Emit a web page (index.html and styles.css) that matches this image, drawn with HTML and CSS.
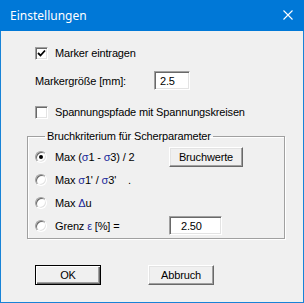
FILE: index.html
```html
<!DOCTYPE html>
<html lang="de">
<head>
<meta charset="UTF-8">
<title>Einstellungen</title>
<link rel="stylesheet" href="styles.css">
</head>
<body>

<div class="fenster">
  <div class="titel">
    <span>Einstellungen</span>
    <svg class="schliessen" width="10" height="10" viewBox="0 0 10 10">
      <path d="M0.5 0.5 L9.5 9.5 M9.5 0.5 L0.5 9.5" stroke="#fff" stroke-width="1.1" fill="none"/>
    </svg>
  </div>

  <div class="inhalt">
    <div class="zeile zeile-marker">
      <span class="check">
        <svg width="11" height="11" viewBox="0 0 11 11">
          <polyline points="2,5 4.5,7.5 9,2.5" stroke="#000" stroke-width="1.8" fill="none"/>
        </svg>
      </span>
      <span>Marker eintragen</span>
    </div>

    <div class="zeile zeile-groesse">
      <span class="beschriftung">Markergröße [mm]:</span>
      <span class="eingabe eingabe-klein">2.5</span>
    </div>

    <div class="zeile zeile-pfade">
      <span class="check"></span>
      <span>Spannungspfade mit Spannungskreisen</span>
    </div>

    <fieldset class="gruppe">
      <legend>Bruchkriterium für Scherparameter</legend>
      <div class="option">
        <span class="radio aktiv"></span>
        <span class="text">Max (<span class="sym">σ</span>1 - <span class="sym">σ</span>3) / 2</span>
        <span class="knopf knopf-bruch">Bruchwerte</span>
      </div>
      <div class="option">
        <span class="radio"></span>
        <span class="text">Max <span class="sym">σ</span>1' / <span class="sym">σ</span>3'<span class="punkt">.</span></span>
      </div>
      <div class="option">
        <span class="radio"></span>
        <span class="text">Max <span class="sym">Δ</span>u</span>
      </div>
      <div class="option">
        <span class="radio"></span>
        <span class="text">Grenz <span class="sym">ε</span> [%] =</span>
        <span class="eingabe eingabe-grenz">2.50</span>
      </div>
    </fieldset>

    <div class="knoepfe">
      <span class="knopf standard">OK</span>
      <span class="knopf">Abbruch</span>
    </div>
  </div>
</div>

</body>
</html>
```

FILE: styles.css
```css
body {
  margin: 0;
  background-color: #f0f0f0;
  font-family: "Liberation Sans", Arial, sans-serif;
  font-size: 11px;
  letter-spacing: -0.15px;
  color: #000;
}
.fenster {
  width: 304px;
  height: 303px;
  box-sizing: border-box;
  border: 1px solid #1883d7;
  border-top: none;
  background-color: #f0f0f0;
}
/* Titelleiste */
.titel {
  height: 30px;
  margin: 0 -1px;
  background-color: #0078d7;
  color: #fff;
  font-family: "Noto Sans", "Open Sans", sans-serif;
  font-size: 12px;
  letter-spacing: 0;
  display: flex;
  align-items: center;
  justify-content: space-between;
  padding: 0 11px 1px 10px;
}
.schliessen {
  display: block;
}
.inhalt {
  padding-left: 34px;
}
.zeile {
  display: flex;
  align-items: center;
  height: 16px;
}
.zeile-marker {
  margin-top: 14px;
}
.zeile-groesse {
  margin-top: 10px;
  height: 19px;
}
.zeile-pfade {
  margin-top: 14px;
}
.beschriftung {
  width: 119px;
}
/* Kontrollkästchen */
.check {
  width: 13px;
  height: 13px;
  box-sizing: border-box;
  margin-right: 7px;
  background-color: #fff;
  border-top: 1px solid #a0a0a0;
  border-left: 1px solid #a0a0a0;
  border-right: 1px solid #fff;
  border-bottom: 1px solid #fff;
  box-shadow: inset 1px 1px #696969, inset -1px -1px #e3e3e3;
  display: flex;
  align-items: center;
  justify-content: center;
}
.check svg {
  display: block;
}
/* Eingabefelder */
.eingabe {
  height: 19px;
  box-sizing: border-box;
  background-color: #fff;
  border-top: 1px solid #a0a0a0;
  border-left: 1px solid #a0a0a0;
  border-right: 1px solid #fff;
  border-bottom: 1px solid #fff;
  box-shadow: inset 1px 1px #696969, inset -1px -1px #e3e3e3;
  display: flex;
  align-items: center;
}
.eingabe-klein {
  width: 36px;
  padding-left: 5px;
}
.eingabe-grenz {
  width: 53px;
  padding-left: 11px;
}
/* Gruppe */
.gruppe {
  margin: 9px 0 0 -8px;
  width: 258px;
  box-sizing: border-box;
  padding: 2px 0 1px 7px;
  border: 1px solid #a0a0a0;
  box-shadow: 1px 1px #fff, inset 1px 1px #fff;
}
.gruppe legend {
  margin-left: 10px;
  padding: 0 2px;
  line-height: 14px;
}
.option {
  display: flex;
  align-items: center;
  height: 23px;
}
.option .text {
  width: 114px;
}
.sym {
  color: #1a2a9a;
}
.punkt {
  margin-left: 12px;
}
.radio {
  width: 12px;
  height: 12px;
  box-sizing: border-box;
  margin-right: 8px;
  border-radius: 50%;
  background-color: #fff;
  border: 1px solid;
  border-color: #a0a0a0 #fff #fff #a0a0a0;
  box-shadow: inset 1px 1px #696969, inset -1px -1px #e3e3e3;
  display: flex;
  align-items: center;
  justify-content: center;
}
.radio.aktiv::after {
  content: "";
  width: 4px;
  height: 4px;
  border-radius: 50%;
  background-color: #000;
}
/* Schaltflächen */
.knopf {
  width: 66px;
  height: 20px;
  box-sizing: border-box;
  background-color: #f0f0f0;
  border: 1px solid;
  border-color: #fff #696969 #696969 #fff;
  box-shadow: inset -1px -1px #a0a0a0, inset 1px 1px #e3e3e3;
  display: flex;
  align-items: center;
  justify-content: center;
}
.knopf-bruch {
  width: 74px;
}
.knopf.standard {
  border-color: #000;
  box-shadow: inset 1px 1px #fff, inset -1px -1px #696969, inset -2px -2px #a0a0a0;
}
.knoepfe {
  display: flex;
  gap: 47px;
  margin-top: 26px;
}
```
